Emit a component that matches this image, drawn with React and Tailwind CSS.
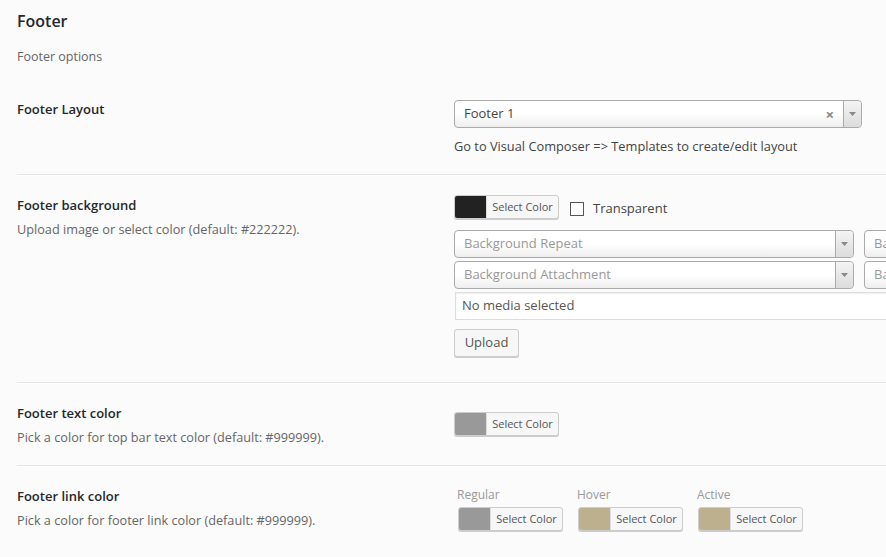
import React from 'react';

const font = { fontFamily: '"Open Sans", "Noto Sans", sans-serif' };

function Arrow() {
  return (
    <div className="flex w-[18px] shrink-0 items-center justify-center rounded-r-[4px] border-l border-[#aaa] bg-gradient-to-b from-[#f4f4f4] to-[#dcdcdc]">
      <svg width="7" height="4" viewBox="0 0 7 4">
        <path d="M0 0 L7 0 L3.5 4 Z" fill="#888" />
      </svg>
    </div>
  );
}

function Select({ value, placeholder, clear, className }) {
  return (
    <div className={`flex h-[28px] rounded-[4px] border border-[#aaa] bg-gradient-to-b from-white from-50% to-[#eee] ${className}`}>
      <div className={`flex flex-1 items-center pl-[9px] text-[13px] ${value ? 'text-[#444]' : 'text-[#999]'}`}>
        {value || placeholder}
      </div>
      {clear && (
        <div className="flex items-center pr-[9px] text-[15px] font-bold text-[#888]">×</div>
      )}
      <Arrow />
    </div>
  );
}

function ColorButton({ color }) {
  return (
    <div className="flex h-[24px] w-[105px] overflow-hidden rounded-[3px] border border-[#ccc] bg-[#f7f7f7] shadow-[0_1px_0_#ccc]">
      <div className="w-[31px]" style={{ backgroundColor: color }} />
      <div className="flex flex-1 items-center justify-center border-l border-[#ddd] text-[11px] text-[#555]">
        Select Color
      </div>
    </div>
  );
}

function Row({ title, desc, children, leftPt = 'pt-[21px]', rightClass, last }) {
  return (
    <div className={`flex ${last ? '' : 'border-b border-[#e5e5e5] shadow-[0_1px_0_#fff]'}`}>
      <div className={`w-[437px] shrink-0 ${leftPt}`}>
        <div className="text-[13px] leading-[18px] font-[550] text-[#23282d]">{title}</div>
        {desc && <div className="mt-[6px] text-[12.7px] leading-[18px] text-[#666]">{desc}</div>}
      </div>
      <div className={`flex-1 ${rightClass}`}>{children}</div>
    </div>
  );
}

export default function App() {
  return (
    <div className="h-[557px] w-[886px] overflow-hidden bg-[#fbfbfb]" style={font}>
      <div className="w-[1000px] pl-[17px]">
        <h2 className="pt-[10px] text-[16px] leading-[22px] font-semibold text-[#23282d]">Footer</h2>
        <p className="mt-[16px] text-[12.5px] leading-[18px] text-[#666]">Footer options</p>

        <div className="mt-[19px]">
          <Row title="Footer Layout" leftPt="pt-[15px]" rightClass="pt-[15px] pb-[19px]">
            <Select value="Footer 1" clear className="w-[408px]" />
            <div className="mt-[9px] text-[12.8px] leading-[18px] text-[#444]">
              Go to Visual Composer =&gt; Templates to create/edit layout
            </div>
          </Row>

          <Row
            title="Footer background"
            desc="Upload image or select color (default: #222222)."
            rightClass="pt-[20px] pb-[25px]"
          >
            <div className="flex items-center">
              <ColorButton color="#222222" />
              <div className="ml-[11px] mt-[4px] flex items-center">
                <div className="h-[14px] w-[14px] border border-[#555] bg-white" />
                <span className="ml-[9px] text-[13px] text-[#444]">Transparent</span>
              </div>
            </div>
            <div className="mt-[11px] flex gap-[10px]">
              <Select placeholder="Background Repeat" className="w-[400px]" />
              <Select placeholder="Background Size" className="w-[200px]" />
            </div>
            <div className="mt-[3px] flex gap-[10px]">
              <Select placeholder="Background Attachment" className="w-[400px]" />
              <Select placeholder="Background Position" className="w-[200px]" />
            </div>
            <div className="ml-[1px] mt-[3px] flex h-[28px] w-[520px] items-center border border-[#ddd] bg-white pl-[6px] text-[13px] text-[#555] shadow-[inset_0_1px_2px_rgba(0,0,0,0.07)]">
              No media selected
            </div>
            <button className="mt-[9px] h-[28px] w-[65px] rounded-[3px] border border-[#ccc] bg-[#f7f7f7] text-[13px] text-[#555] shadow-[0_1px_0_#ccc]">
              Upload
            </button>
          </Row>

          <Row
            title="Footer text color"
            desc="Pick a color for top bar text color (default: #999999)."
            rightClass="pt-[29px] pb-[29px]"
          >
            <ColorButton color="#999999" />
          </Row>

          <Row
            title="Footer link color"
            desc="Pick a color for footer link color (default: #999999)."
            rightClass="pt-[21px]"
            last
          >
            <div className="flex pl-[3px]">
              {[
                ['Regular', '#999999'],
                ['Hover', '#bcb08f'],
                ['Active', '#bcb08f'],
              ].map(([label, color]) => (
                <div key={label} className="w-[120px]">
                  <div className="text-[12px] leading-[16px] text-[#999]">{label}</div>
                  <div className="ml-[1px] mt-[4px]">
                    <ColorButton color={color} />
                  </div>
                </div>
              ))}
            </div>
          </Row>
        </div>
      </div>
    </div>
  );
}
